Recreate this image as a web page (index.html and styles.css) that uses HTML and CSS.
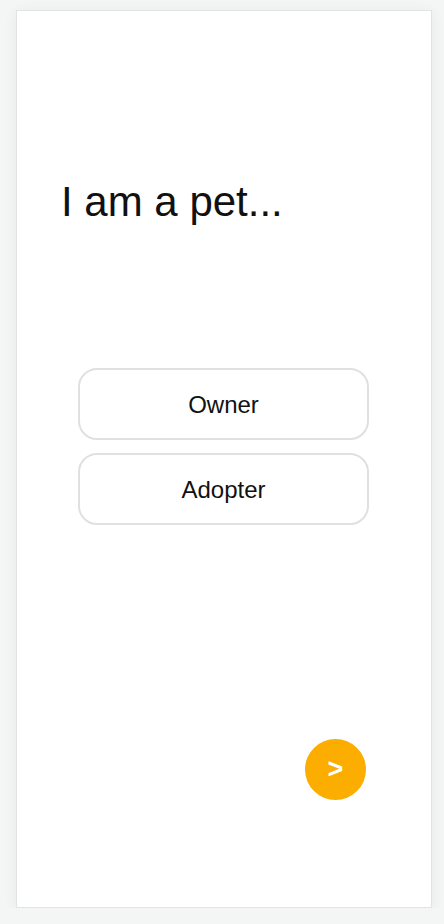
FILE: index.html
```html
<!DOCTYPE html>
<html lang="en">
<head>
    <meta charset="UTF-8">
    <meta name="viewport" content="width=device-width, initial-scale=1.0">
    <title>I am a pet...</title>
    <link rel="stylesheet" href="styles.css">
</head>
<body>

    <div class="screen">
        <h1 class="title">I am a pet...</h1>

        <div class="choices">
            <button class="choice">Owner</button>
            <button class="choice">Adopter</button>
        </div>

        <div class="next-row">
            <button class="next-btn">&gt;</button>
        </div>
    </div>

</body>
</html>
```

FILE: styles.css
```css
body {
    font-family: "Liberation Sans", Arial, sans-serif;
    background-color: #f4f5f5;
    margin: 0;
    padding: 0;
}

.screen {
    box-sizing: border-box;
    width: 416px;
    height: 898px;
    margin: 10px 0 0 16px;
    background-color: white;
    border: 1px solid #e2e3e3;
    box-shadow: 0 2px 14px rgba(0, 0, 0, 0.06);
    display: flex;
    flex-direction: column;
}

.title {
    margin: 167px 0 0 0;
    padding-left: 44px;
    font-size: 42px;
    line-height: 48px;
    font-weight: normal;
    color: #111;
}

.choices {
    margin: 142px 0 0 61px;
    display: flex;
    flex-direction: column;
    gap: 13px;
}

.choice {
    box-sizing: border-box;
    width: 291px;
    height: 72px;
    padding-top: 2px;
    background-color: white;
    border: 2px solid #e0e0e0;
    border-radius: 19px;
    font-family: inherit;
    font-size: 24px;
    color: #111;
    cursor: pointer;
}

.next-row {
    display: flex;
    justify-content: flex-end;
    margin: 214px 65px 0 0;
}

.next-btn {
    width: 61px;
    height: 61px;
    border: none;
    border-radius: 50%;
    background-color: #fbad00;
    color: white;
    font-family: inherit;
    font-size: 27px;
    font-weight: bold;
    padding: 0;
    cursor: pointer;
}
```
